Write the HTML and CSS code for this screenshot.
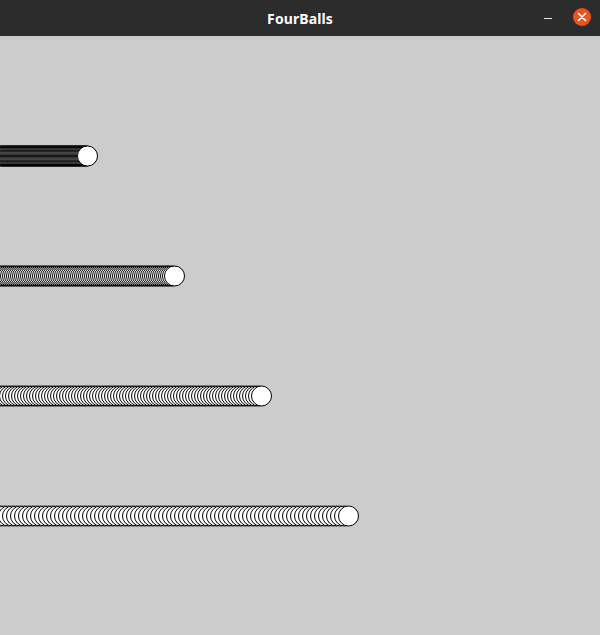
FILE: index.html
```html
<!DOCTYPE html>
<html>
<head>
<meta charset="utf-8">
<title>FourBalls</title>
<link rel="stylesheet" href="styles.css">
</head>
<body>
<div class="window">
  <header class="titlebar">
    <div class="title">FourBalls</div>
    <div class="controls">
      <span class="minimize"></span>
      <span class="close">
        <svg width="18" height="18" viewBox="0 0 18 18">
          <path d="M5.5 5.5 L12.5 12.5 M12.5 5.5 L5.5 12.5" stroke="#fff" stroke-width="1.6" stroke-linecap="round"/>
        </svg>
      </span>
    </div>
  </header>
  <main class="sketch">
    <canvas id="c" width="600" height="599"></canvas>
  </main>
</div>
<script src="script.js"></script>
</body>
</html>
```

FILE: styles.css
```css
html, body {
  margin: 0;
  padding: 0;
  background: #cccccc;
}
.window {
  width: 600px;
  height: 635px;
  display: flex;
  flex-direction: column;
  overflow: hidden;
}
.titlebar {
  height: 36px;
  flex: 0 0 36px;
  background: #2c2c2c;
  display: flex;
  align-items: center;
  justify-content: center;
  position: relative;
}
.title {
  color: #ffffff;
  font-family: "Noto Sans", "DejaVu Sans", sans-serif;
  font-weight: 700;
  font-size: 14px;
  letter-spacing: 0.1px;
}
.controls {
  position: absolute;
  right: 9px;
  top: 8px;
  display: flex;
  align-items: center;
  gap: 21px;
}
.minimize {
  display: block;
  width: 8px;
  height: 1.5px;
  background: #e8e8e8;
  margin-top: 3px;
}
.close {
  width: 18px;
  height: 18px;
  border-radius: 50%;
  background: #e9541f;
  display: flex;
  align-items: center;
  justify-content: center;
}
.close svg {
  display: block;
}
.sketch {
  flex: 1;
  background: #cccccc;
}
.sketch canvas {
  display: block;
}
```

FILE: script.js
```js
(function () {
  var c = document.getElementById('c');
  var ctx = c.getContext('2d');
  ctx.fillStyle = '#cccccc';
  ctx.fillRect(0, 0, c.width, c.height);
  var rows = [120, 240, 360, 480];
  var frames = 87;
  for (var f = 0; f <= frames; f++) {
    for (var r = 0; r < 4; r++) {
      var x = (r + 1) * f;
      ctx.beginPath();
      ctx.arc(x + 0.5, rows[r], 10, 0, Math.PI * 2);
      ctx.fillStyle = '#ffffff';
      ctx.fill();
      ctx.lineWidth = 1;
      ctx.strokeStyle = '#000000';
      ctx.stroke();
    }
  }
})();
```
